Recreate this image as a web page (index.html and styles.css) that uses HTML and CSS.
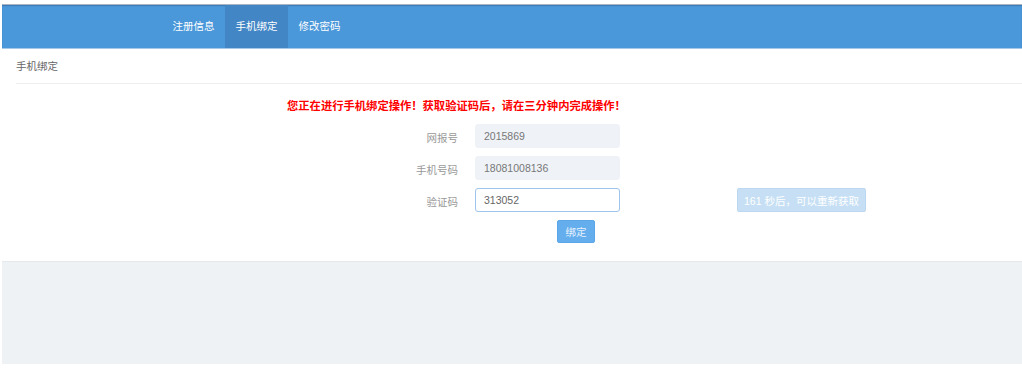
FILE: index.html
```
<!DOCTYPE html>
<html lang="zh-CN">
<head>
  <meta charset="UTF-8">
  <meta name="viewport" content="width=device-width, initial-scale=1.0">
  <title>手机绑定</title>
  <link rel="stylesheet" href="styles.css">
</head>
<body>
  <div class="page">
    <div class="header">
      <ul class="nav">
        <li><a href="#">注册信息</a></li>
        <li class="active"><a href="#">手机绑定</a></li>
        <li><a href="#">修改密码</a></li>
      </ul>
    </div>

    <div class="content">
      <div class="breadcrumb">手机绑定</div>

      <p class="warning">您正在进行手机绑定操作！获取验证码后，请在三分钟内完成操作！</p>

      <form class="bind-form">
        <div class="form-row">
          <label for="wbh">网报号</label>
          <input type="text" id="wbh" value="2015869" readonly>
        </div>
        <div class="form-row">
          <label for="phone">手机号码</label>
          <input type="text" id="phone" value="18081008136" readonly>
        </div>
        <div class="form-row">
          <label for="code">验证码</label>
          <input type="text" id="code" class="editable" value="313052">
          <button type="button" class="countdown" disabled>161 秒后，可以重新获取</button>
        </div>
        <div class="form-row">
          <span class="spacer"></span>
          <button type="submit" class="submit">绑定</button>
        </div>
      </form>
    </div>

    <div class="footer"></div>
  </div>
</body>
</html>
```

FILE: styles.css
```
* {
  box-sizing: border-box;
  margin: 0;
  padding: 0;
}

body {
  font-family: 'Liberation Sans', 'Noto Sans CJK SC', sans-serif;
  background: #fff;
  color: #666;
}

.page {
  padding: 4px 0 0 2px;
}

.header {
  height: 45px;
  background: #4a97d9;
  border-top: 1px solid #a9b4c2;
  border-bottom: 1px solid #a8c8ea;
  box-shadow: inset 0 1px 1px rgba(40, 70, 110, 0.35);
}

.nav {
  list-style: none;
  display: flex;
  padding-left: 160px;
  height: 100%;
}

.nav li a {
  display: block;
  width: 63px;
  line-height: 43px;
  text-align: center;
  color: #fff;
  font-size: 10.5px;
  text-decoration: none;
}

.nav li.active a {
  background: #4286c5;
}

.content {
  padding-left: 14px;
}

.breadcrumb {
  height: 35px;
  line-height: 34px;
  font-size: 10.5px;
  color: #666;
  border-bottom: 1px solid #eeeeee;
}

.warning {
  margin-top: 12px;
  padding-left: 271px;
  line-height: 20px;
  font-size: 11.3px;
  font-weight: bold;
  color: #ff0000;
}

.bind-form {
  margin-top: 8px;
}

.form-row {
  display: flex;
  align-items: center;
  margin-bottom: 8px;
}

.form-row label,
.form-row .spacer {
  width: 442px;
  margin-right: 17px;
  text-align: right;
  font-size: 10.5px;
  color: #999;
  padding-top: 2px;
}

.form-row input {
  width: 145px;
  height: 24px;
  padding: 0 8px;
  border: 1px solid #eef2f6;
  border-radius: 3px;
  background: #eff3f7;
  font-family: inherit;
  font-size: 10.5px;
  color: #777;
}

.form-row input.editable {
  background: #fff;
  border-color: #9cc4ec;
  color: #666;
}

.countdown {
  margin-left: 117px;
  width: 129px;
  height: 24px;
  border: 1px solid #bcd8f1;
  border-radius: 2px;
  background: #c6dff4;
  color: #fff;
  font-family: inherit;
  font-size: 10.5px;
}

.submit {
  margin-left: 82px;
  width: 38px;
  height: 23px;
  border: 1px solid #5aa6e8;
  border-radius: 2px;
  background: #65aeee;
  color: #e8f2fc;
  font-family: inherit;
  font-size: 10.5px;
}

.footer {
  margin-top: 18px;
  height: 103px;
  background: #eff2f4;
  border-top: 1px solid #e6e9ec;
}
```
